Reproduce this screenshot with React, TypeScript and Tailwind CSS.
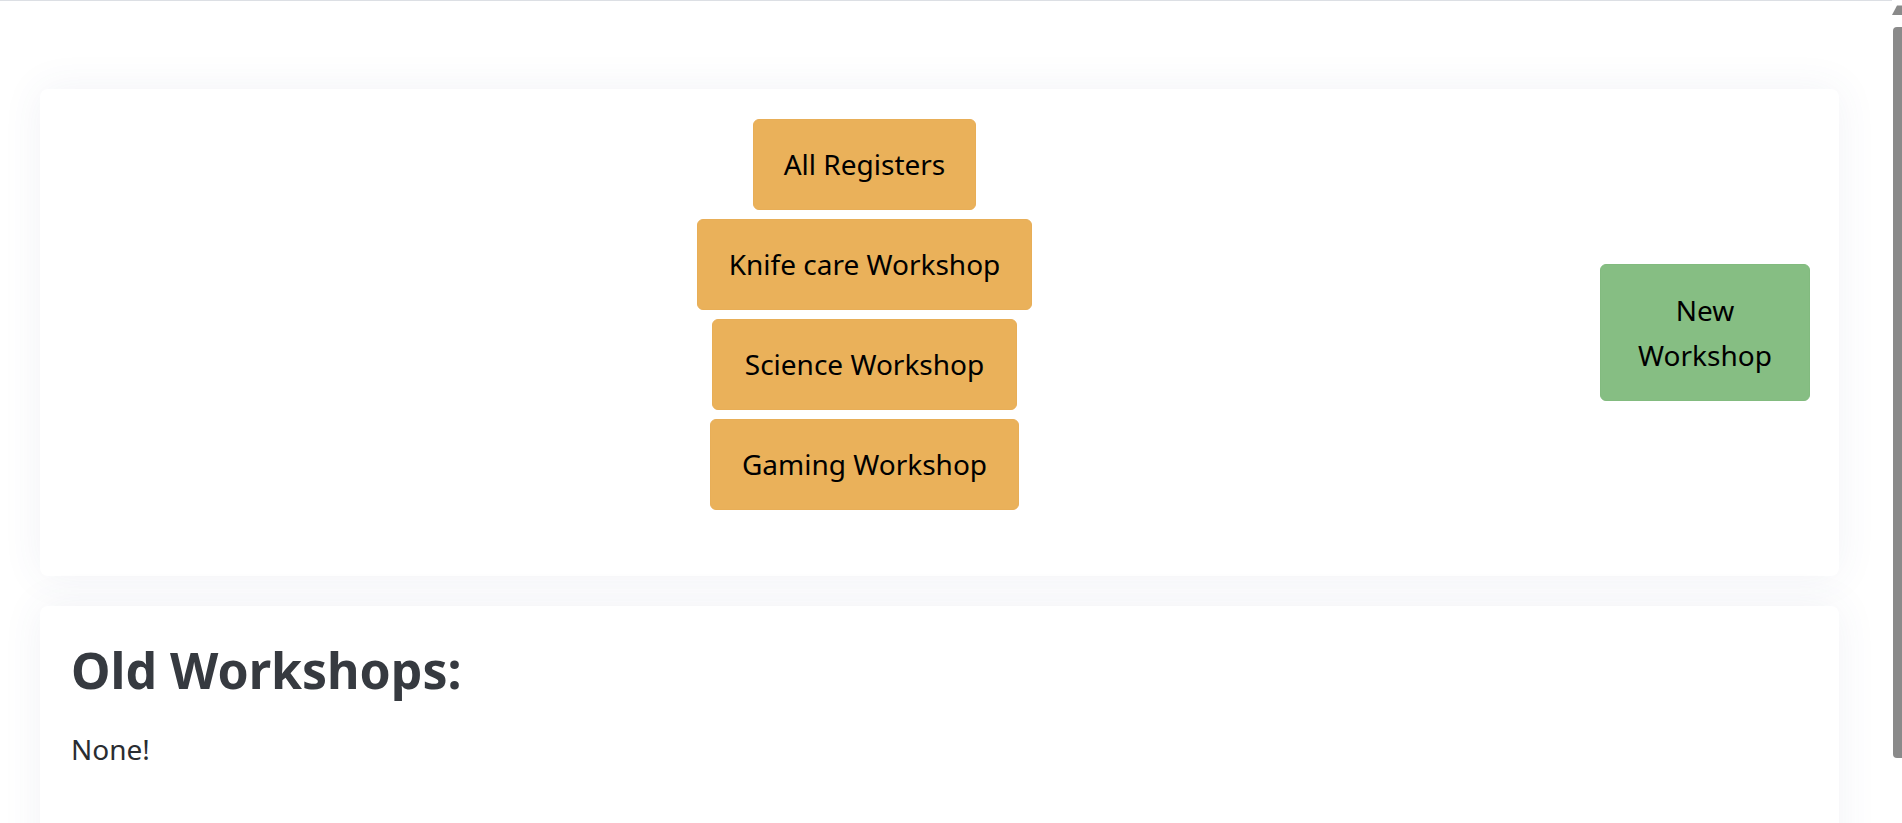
import React from "react";

const font = { fontFamily: '"Noto Sans", "Open Sans", sans-serif' };

function OrangeButton({ label, width }: { label: string; width: string }) {
  return (
    <button
      className={`flex h-[91px] items-center justify-center rounded-[6px] border border-[#e8ae57] bg-[#eab15a] text-[28px] leading-[45px] text-black ${width}`}
    >
      {label}
    </button>
  );
}

export default function App() {
  return (
    <div
      className="flex h-[823px] w-[1902px] overflow-hidden bg-white"
      style={font}
    >
      <div className="flex-1 border-t border-[#dcdfe4]">
        <div className="ml-[40px] mt-[88px] w-[1799px]">
          <div className="flex items-center rounded-[8px] bg-white pl-[89px] pr-[29px] shadow-[0_0_40px_0_rgba(70,75,140,0.075)]">
            <div className="flex flex-1 flex-col items-center gap-[9px] pb-[66px] pt-[30px]">
              <OrangeButton label="All Registers" width="w-[223px]" />
              <OrangeButton label="Knife care Workshop" width="w-[335px]" />
              <OrangeButton label="Science Workshop" width="w-[305px]" />
              <OrangeButton label="Gaming Workshop" width="w-[309px]" />
            </div>
            <button className="flex h-[137px] w-[210px] flex-col items-center justify-center rounded-[6px] border border-[#82bb7f] bg-[#86be83] text-[28px] leading-[45px] text-black">
              <span>New</span>
              <span>Workshop</span>
            </button>
          </div>
          <div className="mt-[30px] h-[300px] rounded-[8px] bg-white pl-[31px] pt-[34px] shadow-[0_0_40px_0_rgba(70,75,140,0.075)]">
            <h1 className="mb-[27px] text-[50px] font-bold leading-[60px] text-[#363a40]">
              Old Workshops:
            </h1>
            <p className="text-[28px] leading-[45px] text-[#2a2d31]">None!</p>
          </div>
        </div>
      </div>
      <div className="flex w-[10px] flex-col">
        <svg className="mt-[5px] h-[10px] w-[10px]" viewBox="0 0 10 10">
          <polygon points="0,10 5,0.5 10,0.5 10,10" fill="#8a8a8a" />
        </svg>
        <div className="ml-auto mt-[12px] h-[731px] w-[9px] rounded-l-[4px] bg-[#8a8a8a]" />
      </div>
    </div>
  );
}
